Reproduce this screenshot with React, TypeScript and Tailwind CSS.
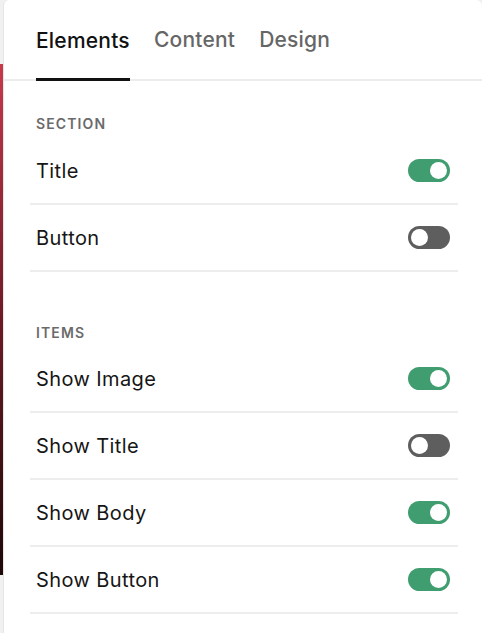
import React from "react";

function Toggle({ on }: { on: boolean }) {
  return (
    <div
      className={
        "w-[42px] h-[23px] rounded-full flex items-center px-[3px] " +
        (on ? "bg-[#3f9d6f] justify-end" : "bg-[#5e5e5e] justify-start")
      }
    >
      <div className="w-[17px] h-[17px] rounded-full bg-white" />
    </div>
  );
}

function Row({ label, on }: { label: string; on: boolean }) {
  return (
    <div className="h-[67px] border-b-2 border-[#ededed] flex items-center justify-between pl-[6px] pr-[8px]">
      <span className="text-[20px] tracking-[0.02em] text-[#161616] pt-[1px]">{label}</span>
      <Toggle on={on} />
    </div>
  );
}

function Label({ children }: { children: React.ReactNode }) {
  return (
    <div className="pl-[6px] text-[14px] leading-4 font-semibold tracking-[0.08em] text-[#6b6b6b]">
      {children}
    </div>
  );
}

export default function App() {
  return (
    <div
      className="w-[482px] h-[633px] flex bg-[#f0f0f0] overflow-hidden"
      style={{ fontFamily: "Inter, 'Noto Sans', sans-serif" }}
    >
      <div className="w-[3px] flex flex-col">
        <div className="h-[64px]" />
        <div className="h-[511px] bg-gradient-to-b from-[#c8394b] via-[#6e1a26] to-[#1e0808]" />
        <div className="flex-1" />
      </div>
      <div className="flex-1 bg-white border-l border-[#e6e6e6] rounded-tl-[6px] rounded-tr-[6px]">
        <div className="h-[81px] border-b-2 border-[#ececec] flex gap-[24px] px-[32px]">
          <div className="border-b-[3px] border-[#111] -mb-[2px] flex items-center pt-[3px]">
            <span className="text-[21px] tracking-[0.01em] font-medium text-[#111]">Elements</span>
          </div>
          <div className="flex items-center pt-[1px]">
            <span className="text-[21px] tracking-[0.01em] font-medium text-[#666]">Content</span>
          </div>
          <div className="flex items-center pt-[1px]">
            <span className="text-[21px] tracking-[0.01em] font-medium text-[#666]">Design</span>
          </div>
        </div>
        <div className="pl-[26px] pr-[24px]">
          <div className="pt-[35px]">
            <Label>SECTION</Label>
          </div>
          <div className="mt-[6px]">
            <Row label="Title" on={true} />
            <Row label="Button" on={false} />
          </div>
          <div className="pt-[53px]">
            <Label>ITEMS</Label>
          </div>
          <div className="mt-[5px]">
            <Row label="Show Image" on={true} />
            <Row label="Show Title" on={false} />
            <Row label="Show Body" on={true} />
            <Row label="Show Button" on={true} />
          </div>
        </div>
      </div>
    </div>
  );
}
